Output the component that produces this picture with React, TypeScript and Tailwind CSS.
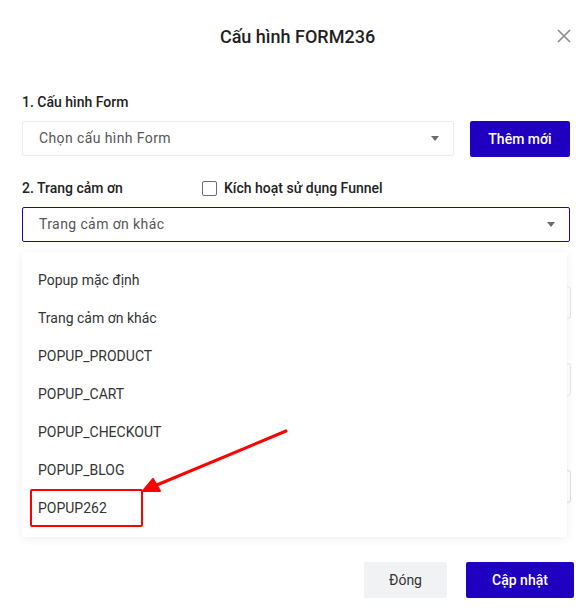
import React from 'react';

const options = [
  'Popup mặc định',
  'Trang cảm ơn khác',
  'POPUP_PRODUCT',
  'POPUP_CART',
  'POPUP_CHECKOUT',
  'POPUP_BLOG',
  'POPUP262',
];

const Caret: React.FC = () => (
  <svg width="8" height="5" viewBox="0 0 8 5" className="shrink-0">
    <path d="M0 0 L8 0 L4 5 Z" fill="#6b6b6b" />
  </svg>
);

const App: React.FC = () => {
  return (
    <div
      className="relative w-[587px] h-[616px] bg-white overflow-hidden text-[#333]"
      style={{ fontFamily: 'Roboto, "Noto Sans", sans-serif' }}
    >
      {/* header */}
      <header className="relative h-[72px] flex items-center justify-center pl-[8px]">
        <h2 className="text-[18px] font-medium text-[#1f1f1f]">Cấu hình FORM236</h2>
        <button className="absolute right-[15px] top-[28px] text-[#8a8a8a]">
          <svg width="16" height="16" viewBox="0 0 16 16">
            <path d="M2 2 L14 14 M14 2 L2 14" stroke="#8a8a8a" strokeWidth="1.6" />
          </svg>
        </button>
      </header>

      <div className="pl-[22px] pr-[17px]">
        <div className="pt-[21px] text-[14px] font-medium leading-[18px] text-[#222]">1. Cấu hình Form</div>
        <div className="mt-[10px] flex gap-[16px]">
          <div className="flex-1 h-[35px] border border-[#ececec] rounded-[2px] flex items-center justify-between pl-[16px] pr-[14px]">
            <span className="text-[14px] text-[#555] tracking-[0.4px]">Chọn cấu hình Form</span>
            <Caret />
          </div>
          <button className="w-[100px] h-[36px] bg-[#2000c0] rounded-[2px] text-white text-[14px] font-medium">
            Thêm mới
          </button>
        </div>

        <div className="mt-[22px] flex items-center h-[18px]">
          <span className="w-[180px] text-[14px] font-medium text-[#222]">2. Trang cảm ơn</span>
          <span className="w-[15px] h-[15px] border border-[#6b6b6b] rounded-[2px] bg-white" />
          <span className="ml-[7px] text-[14px] font-medium text-[#222]">Kích hoạt sử dụng Funnel</span>
        </div>
        <div className="mt-[10px] h-[35px] border border-[#2000c0] rounded-[2px] flex items-center justify-between pl-[16px] pr-[14px]">
          <span className="text-[14px] text-[#555] tracking-[0.4px]">Trang cảm ơn khác</span>
          <Caret />
        </div>

        {/* fields hidden behind the open list */}
        <div className="mr-[-1px] flex flex-col">
          <div className="mt-[44px] h-[33px] border border-[#e6e6e6] rounded-[3px]" />
          <div className="mt-[44px] h-[33px] border border-[#e6e6e6] rounded-[3px]" />
          <div className="mt-[74px] h-[33px] border border-[#e0e0e0] rounded-[3px]" />
        </div>

        <div className="mt-[59px] flex justify-end gap-[19px] mr-[-4px]">
          <button className="w-[83px] h-[36px] bg-[#f1f2f4] rounded-[2px] text-[14px] text-[#333]">Đóng</button>
          <button className="w-[108px] h-[36px] bg-[#2000c0] rounded-[2px] text-[14px] font-medium text-white">
            Cập nhật
          </button>
        </div>
      </div>

      {/* open dropdown */}
      <ul className="absolute left-[22px] top-[252px] w-[545px] h-[285px] bg-white rounded-[3px] shadow-[0_2px_10px_rgba(0,0,0,0.07)] pt-[9px]">
        {options.map((o) => (
          <li key={o} className="h-[38px] flex items-center pl-[16px] text-[14px] text-[#333]">
            {o}
          </li>
        ))}
      </ul>

      {/* annotation */}
      <div className="absolute left-[30px] top-[489px] w-[113px] h-[38px] border-[2px] border-[#ff0000] rounded-[2px]" />
      <svg className="absolute left-0 top-0" width="587" height="616" viewBox="0 0 587 616">
        <path d="M286 431 L152 487" stroke="#ff0000" strokeWidth="3" strokeLinecap="round" />
        <path d="M143 491 L153 479 L160 491 Z" fill="#ff0000" stroke="#ff0000" strokeWidth="2" strokeLinejoin="round" />
      </svg>
    </div>
  );
};

export default App;
